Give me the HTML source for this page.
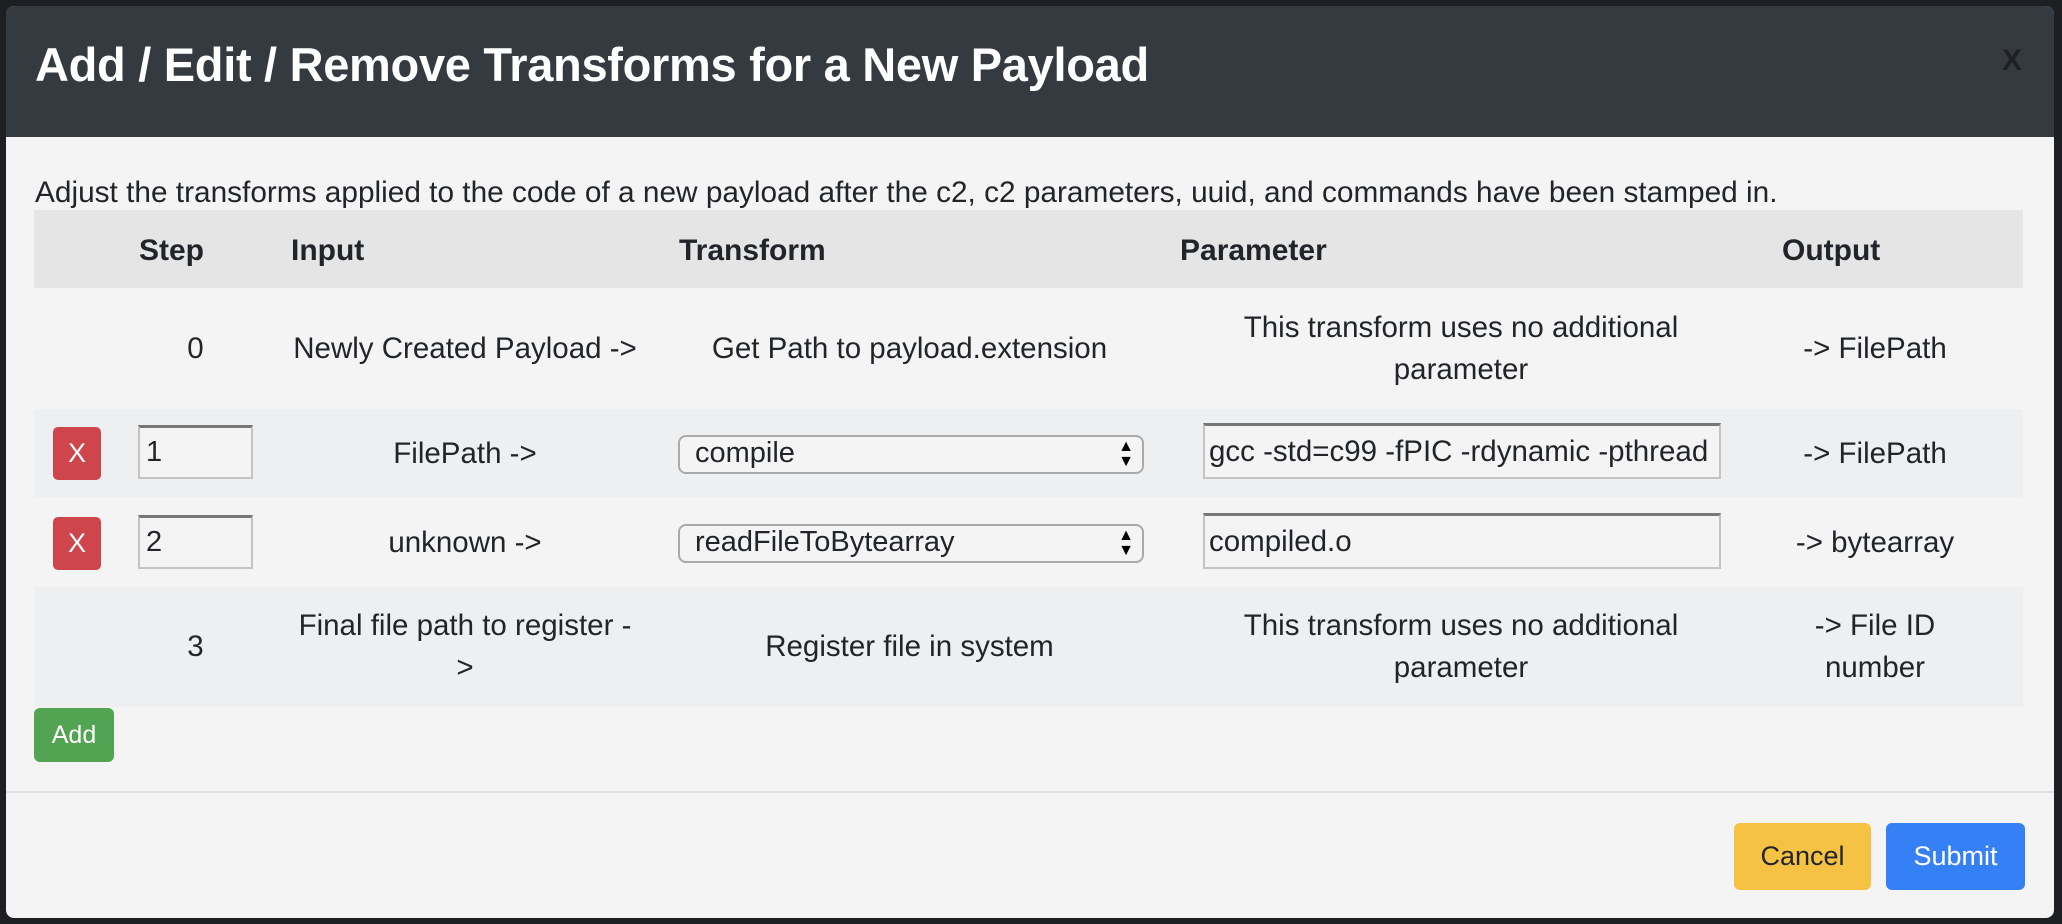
<!DOCTYPE html>
<html><head><meta charset="utf-8"><style>
*{box-sizing:border-box;margin:0;padding:0}
body{width:2062px;height:924px;background:#1e1f22;position:relative;overflow:hidden;font-family:"Liberation Sans",Arial,sans-serif;color:#212529}
.modal{position:absolute;left:6px;top:6px;width:2048px;height:912px;background:#f4f4f4;border-radius:8px;overflow:hidden}
.hdr{position:absolute;left:0;top:0;width:100%;height:131px;background:#343a40}
.title{position:absolute;left:29px;top:31px;font-size:47px;color:#fff;font-weight:bold;letter-spacing:-0.3px}
.close{position:absolute;left:1996px;top:38px;font-size:30px;font-weight:bold;color:#1e2024}
.abs{position:absolute}
.desc{left:29px;top:170px;font-size:29.8px;white-space:nowrap}
.row{position:absolute;left:28px;width:1989px}
.th{font-weight:bold;font-size:30px;position:absolute;top:24px}
.cell{position:absolute;display:flex;align-items:center;justify-content:center;text-align:center;font-size:29.5px;line-height:42px;height:100%}
.xbtn{position:absolute;left:19px;width:48px;height:53px;background:#ce454c;border-radius:5px;color:#fff;font-size:27px;display:flex;align-items:center;justify-content:center}
.num{position:absolute;left:104px;width:115px;height:54px;background:#f4f4f4;border:2px solid #c4c4c4;border-top:3px solid #777;font-size:29px;padding:8px 6px}
.sel{position:absolute;left:644px;width:466px;height:39px;border:2px solid #aaa;border-radius:8px;background:#f4f4f4;font-size:29px;line-height:33px;padding:0 15px}
.sel .ar{position:absolute;right:8px;top:2px;font-size:16px;line-height:15px;color:#000}
.par{position:absolute;left:1169px;width:518px;height:56px;border:2px solid #c4c4c4;border-top:3px solid #777;background:#f4f4f4;font-size:29.5px;padding:9px 4px;white-space:nowrap;overflow:hidden}
.btn{position:absolute;border-radius:6px;font-size:27px;display:flex;align-items:center;justify-content:center}
</style></head><body>
<div class="modal">
 <div class="hdr"><div class="title">Add / Edit / Remove Transforms for a New Payload</div><div class="close">X</div></div>
 <div class="abs desc">Adjust the transforms applied to the code of a new payload after the c2, c2 parameters, uuid, and commands have been stamped in.</div>

 <div class="row" style="top:204px;height:78px;background:#e5e5e5">
  <div class="th" style="left:105px">Step</div>
  <div class="th" style="left:257px">Input</div>
  <div class="th" style="left:645px">Transform</div>
  <div class="th" style="left:1146px">Parameter</div>
  <div class="th" style="left:1748px">Output</div>
 </div>

 <div class="row" style="top:282px;height:121px;background:#f4f4f4">
  <div class="cell" style="left:86px;width:151px">0</div>
  <div class="cell" style="left:237px;width:388px">Newly Created Payload -&gt;</div>
  <div class="cell" style="left:625px;width:501px">Get Path to payload.extension</div>
  <div class="cell" style="left:1126px;width:602px">This transform uses no additional<br>parameter</div>
  <div class="cell" style="left:1721px;width:240px">-&gt; FilePath</div>
 </div>

 <div class="row" style="top:403px;height:89px;background:#eeeff1">
  <div class="xbtn" style="top:18px">X</div>
  <div class="num" style="top:16px">1</div>
  <div class="cell" style="left:237px;width:388px">FilePath -&gt;</div>
  <div class="sel" style="top:26px">compile<div class="ar">▲<br>▼</div></div>
  <div class="par" style="top:14px">gcc -std=c99 -fPIC -rdynamic -pthread</div>
  <div class="cell" style="left:1721px;width:240px">-&gt; FilePath</div>
 </div>

 <div class="row" style="top:492px;height:89px;background:#f4f4f4">
  <div class="xbtn" style="top:19px">X</div>
  <div class="num" style="top:17px">2</div>
  <div class="cell" style="left:237px;width:388px">unknown -&gt;</div>
  <div class="sel" style="top:26px">readFileToBytearray<div class="ar">▲<br>▼</div></div>
  <div class="par" style="top:15px">compiled.o</div>
  <div class="cell" style="left:1721px;width:240px">-&gt; bytearray</div>
 </div>

 <div class="row" style="top:581px;height:120px;background:#eeeff1">
  <div class="cell" style="left:86px;width:151px">3</div>
  <div class="cell" style="left:242px;width:378px">Final file path to register -<br>&gt;</div>
  <div class="cell" style="left:625px;width:501px">Register file in system</div>
  <div class="cell" style="left:1126px;width:602px">This transform uses no additional<br>parameter</div>
  <div class="cell" style="left:1771px;width:140px">-&gt; File ID<br>number</div>
 </div>

 <div class="btn" style="left:28px;top:702px;width:80px;height:54px;background:#52a452;color:#fff;font-size:25px">Add</div>
 <div class="abs" style="left:0;top:785px;width:100%;height:2px;background:#dee2e6"></div>
 <div class="btn" style="left:1728px;top:817px;width:137px;height:67px;background:#f5c244;color:#212529">Cancel</div>
 <div class="btn" style="left:1880px;top:817px;width:139px;height:67px;background:#3680f5;color:#fff">Submit</div>
</div>
</body></html>
